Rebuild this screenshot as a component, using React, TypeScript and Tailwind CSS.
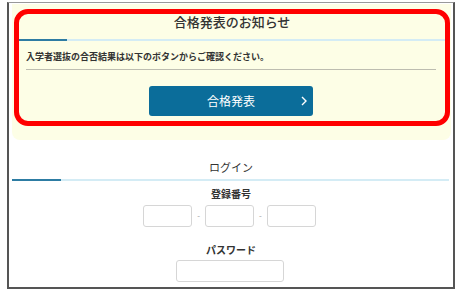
import React from "react";

const jp = { fontFamily: '"Noto Sans CJK JP", "Noto Sans", sans-serif' };

function SectionLine({ blue }: { blue: string }) {
  return (
    <div className="flex h-[2px] w-full">
      <div className={`${blue} h-full bg-[#2d7ca3]`} />
      <div className="h-full flex-1 bg-[#d4ecf5]" />
    </div>
  );
}

function Box({ w }: { w: string }) {
  return <div className={`${w} h-[22px] rounded-[3px] border border-[#d6d6d6] bg-white`} />;
}

export default function App() {
  return (
    <div className="h-[292px] w-[461px] bg-white text-[#333]" style={jp}>
      <div className="ml-[7px] mt-[2px] h-[287px] w-[448px] border-x-2 border-b-2 border-t border-x-[#555] border-b-[#555] border-t-[#999]">
        {/* Notice panel */}
        <div className="ml-[3px] mt-[1px] h-[136px] w-[439px] rounded-b-lg bg-[#fdfee6] pl-[2px] pt-[5px]">
          <div className="h-[117px] w-[436px] rounded-[14px] border-[5px] border-[#ff0000]">
            <div className="text-center text-[13px] font-medium leading-[16px]">
              合格発表のお知らせ
            </div>
            <div className="mt-[9px]">
              <SectionLine blue="w-[48px]" />
            </div>
            <div className="px-[7px] pt-[9px] text-[9px] font-bold leading-[14px]">
              入学者選抜の合否結果は以下のボタンからご確認ください。
            </div>
            <div className="mx-[7px] mt-[5px] mr-[9px] h-px bg-[#bdbdb0]" />
            <div className="mt-[16px] flex justify-center pr-[2px]">
              <div className="relative flex h-[30px] w-[164px] items-center justify-center rounded-[3px] bg-[#0b6d9a] text-[12px] text-white">
                合格発表
                <svg className="absolute right-[6px] top-[10px]" width="6" height="10" viewBox="0 0 6 10">
                  <path d="M1 1l4 4-4 4" fill="none" stroke="white" strokeWidth="1.4" />
                </svg>
              </div>
            </div>
          </div>
        </div>

        {/* Login */}
        <div className="mt-[19px] text-center text-[11px] leading-[16px]">ログイン</div>
        <div className="ml-[3px] mt-[4px] w-[437px]">
          <SectionLine blue="w-[49px]" />
        </div>
        <div className="mt-[6px] text-center text-[10px] font-bold leading-[14px]">登録番号</div>
        <div className="mt-[4px] flex items-center justify-center gap-[5px] pr-[3px]">
          <Box w="w-[49px]" />
          <span className="text-[8px] text-[#999]">-</span>
          <Box w="w-[49px]" />
          <span className="text-[8px] text-[#999]">-</span>
          <Box w="w-[49px]" />
        </div>
        <div className="mt-[16px] text-center text-[10px] font-bold leading-[14px]">パスワード</div>
        <div className="mt-[3px] flex justify-center pr-[3px]">
          <Box w="w-[108px]" />
        </div>
      </div>
    </div>
  );
}
